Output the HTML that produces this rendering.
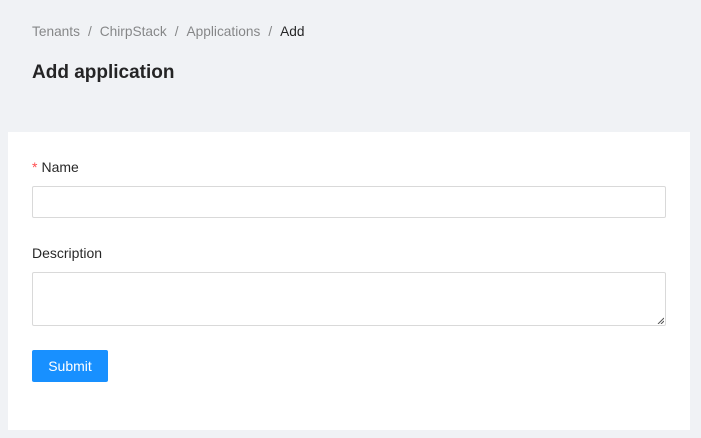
<!DOCTYPE html>
<html><head><meta charset="utf-8"><style>
*{box-sizing:border-box;margin:0;padding:0}
body{width:701px;height:438px;background:#f0f2f5;font-family:"Liberation Sans",sans-serif;font-size:14px;color:rgba(0,0,0,.85);position:relative;overflow:hidden}
.bc{position:absolute;left:32px;top:22px;line-height:20px;color:rgba(0,0,0,.45);font-size:13.7px}
.bc span.s{margin:0 8px}
.bc .cur{color:rgba(0,0,0,.85)}
h1{position:absolute;left:32px;top:59px;font-size:19px;font-weight:600;line-height:28px;color:rgba(0,0,0,.85)}
.card{position:absolute;left:8px;top:132px;width:682px;height:298px;background:#fff}
.lbl{position:absolute;left:32px;line-height:22px}
.req{color:#ff4d4f;margin-right:4px}
.inp{position:absolute;left:32px;width:634px;border:1px solid #d9d9d9;border-radius:2px;background:#fff}
.btn{position:absolute;left:32px;top:350px;width:76px;height:32px;background:#1890ff;border-radius:2px;color:#fff;text-align:center;line-height:32px}
</style></head><body>
<div class="bc">Tenants<span class="s">/</span>ChirpStack<span class="s">/</span>Applications<span class="s">/</span><span class="cur">Add</span></div>
<h1>Add application</h1>
<div class="card"></div>
<div class="lbl" style="top:156px"><span class="req">*</span>Name</div>
<div class="inp" style="top:186px;height:32px"></div>
<div class="lbl" style="top:242px">Description</div>
<div class="inp" style="top:272px;height:54px">
<svg style="position:absolute;right:1px;bottom:1px" width="7" height="7"><path d="M1 7L7 1M4 7L7 4" stroke="#555" stroke-width="1"/></svg>
</div>
<div class="btn">Submit</div>
</body></html>
